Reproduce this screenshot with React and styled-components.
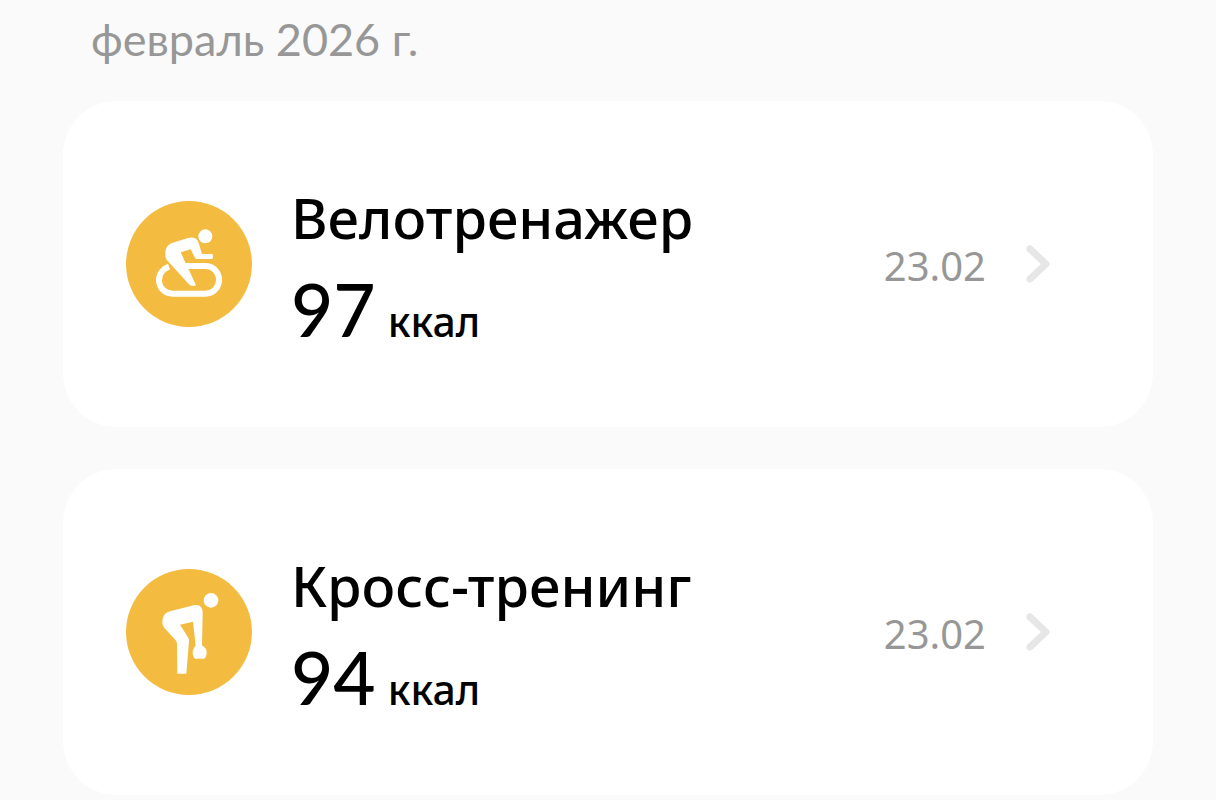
import styled, { createGlobalStyle } from "styled-components";

const GlobalStyle = createGlobalStyle`
  * {
    box-sizing: border-box;
  }
  body {
    margin: 0;
    background-color: #fafafa;
    color: #000000;
    font-family: "Noto Sans", "Open Sans", sans-serif;
  }
`;

const Page = styled.main`
  padding: 9px 63px 0;
`;

const Month = styled.h1`
  margin: 0 0 32px;
  padding: 0 28px;
  color: #979797;
  font-family: Lato, "Noto Sans", sans-serif;
  font-size: 45px;
  font-weight: 400;
  line-height: 60px;
`;

const List = styled.ul`
  margin: 0;
  padding: 0;
  list-style: none;
  display: flex;
  flex-direction: column;
  gap: 42px;
`;

const Card = styled.a`
  display: flex;
  align-items: center;
  padding: 78px 103px 78px 63px;
  border-radius: 54px;
  background-color: #ffffff;
  color: inherit;
  text-decoration: none;
`;

const Badge = styled.svg`
  flex: none;
  width: 126px;
  height: 126px;
  margin-right: 39px;
`;

const Info = styled.div`
  flex: 1;
  min-width: 0;
`;

const Title = styled.h2`
  margin: 0 0 14px;
  font-size: 56px;
  font-weight: 500;
  line-height: 76px;
`;

const Energy = styled.p`
  margin: 0;
  display: flex;
  align-items: baseline;
  gap: 12px;
`;

const Amount = styled.span`
  font-family: Lato, "Noto Sans", sans-serif;
  font-size: 73px;
  font-weight: 500;
  line-height: 80px;
`;

const Unit = styled.span`
  font-size: 41px;
  font-weight: 500;
  line-height: 48px;
`;

const DateLabel = styled.time`
  padding-top: 4px;
  color: #979797;
  font-size: 40px;
  line-height: 56px;
`;

const Chevron = styled.svg`
  flex: none;
  width: 24px;
  height: 40px;
  margin-left: 40px;
`;

const BikeIcon = () => (
  <Badge viewBox="18 18 378 378" aria-hidden="true">
    <circle cx="207" cy="207" r="189" fill="#f3bc40" />
    <circle cx="256" cy="124" r="21" fill="#fff" />
    <path
      d="M147 215c-18 6-30 21-30 40 0 23 17 41 41 41h98c24 0 41-18 41-41s-17-42-41-42h-58"
      fill="none"
      stroke="#fff"
      strokeWidth="18"
    />
    <path
      d="M136 182c-1-20 4-33 22-39l46-14c14-4 26-1 31 12l11 36h31c3 4 3 11 0 15h-45c-4 0-7-2-8-5l-12-24-30 9 46 99c-7 3-16 2-22-4l-62-68c-6-6-7-11-8-17z"
      fill="#fff"
    />
  </Badge>
);

const BendIcon = () => (
  <Badge viewBox="18 18 378 378" aria-hidden="true">
    <circle cx="207" cy="207" r="189" fill="#f3bc40" />
    <circle cx="273" cy="112" r="22" fill="#fff" />
    <path
      d="M128 184c-3-20 4-34 22-39l71-18c17-4 27 5 27 22l-2 98c9 5 14 12 14 22 0 8-3 13-7 18h-28c-4-5-7-10-7-18 0-9 4-16 9-21l-8-72-39 9 24 38c2 4 3 7 3 12l-8 97h-27l-1-88c0-5-1-8-4-12l-33-36c-3-3-5-7-6-12z"
      fill="#fff"
    />
  </Badge>
);

const workouts = [
  { id: 1, title: "Велотренажер", kcal: 97, date: "23.02", Icon: BikeIcon },
  { id: 2, title: "Кросс-тренинг", kcal: 94, date: "23.02", Icon: BendIcon },
];

const Workout = ({ title, kcal, date, Icon }) => (
  <li>
    <Card href="#">
      <Icon />
      <Info>
        <Title>{title}</Title>
        <Energy>
          <Amount>{kcal}</Amount>
          <Unit>ккал</Unit>
        </Energy>
      </Info>
      <DateLabel>{date}</DateLabel>
      <Chevron viewBox="0 0 24 40" aria-hidden="true">
        <path
          d="M4 5l16 15L4 35"
          fill="none"
          stroke="#e6e6e6"
          strokeWidth="7"
          strokeLinecap="round"
          strokeLinejoin="round"
        />
      </Chevron>
    </Card>
  </li>
);

const App = () => (
  <>
    <GlobalStyle />
    <Page>
      <Month>февраль 2026 г.</Month>
      <List>
        {workouts.map((workout) => (
          <Workout key={workout.id} {...workout} />
        ))}
      </List>
    </Page>
  </>
);

export default App;
